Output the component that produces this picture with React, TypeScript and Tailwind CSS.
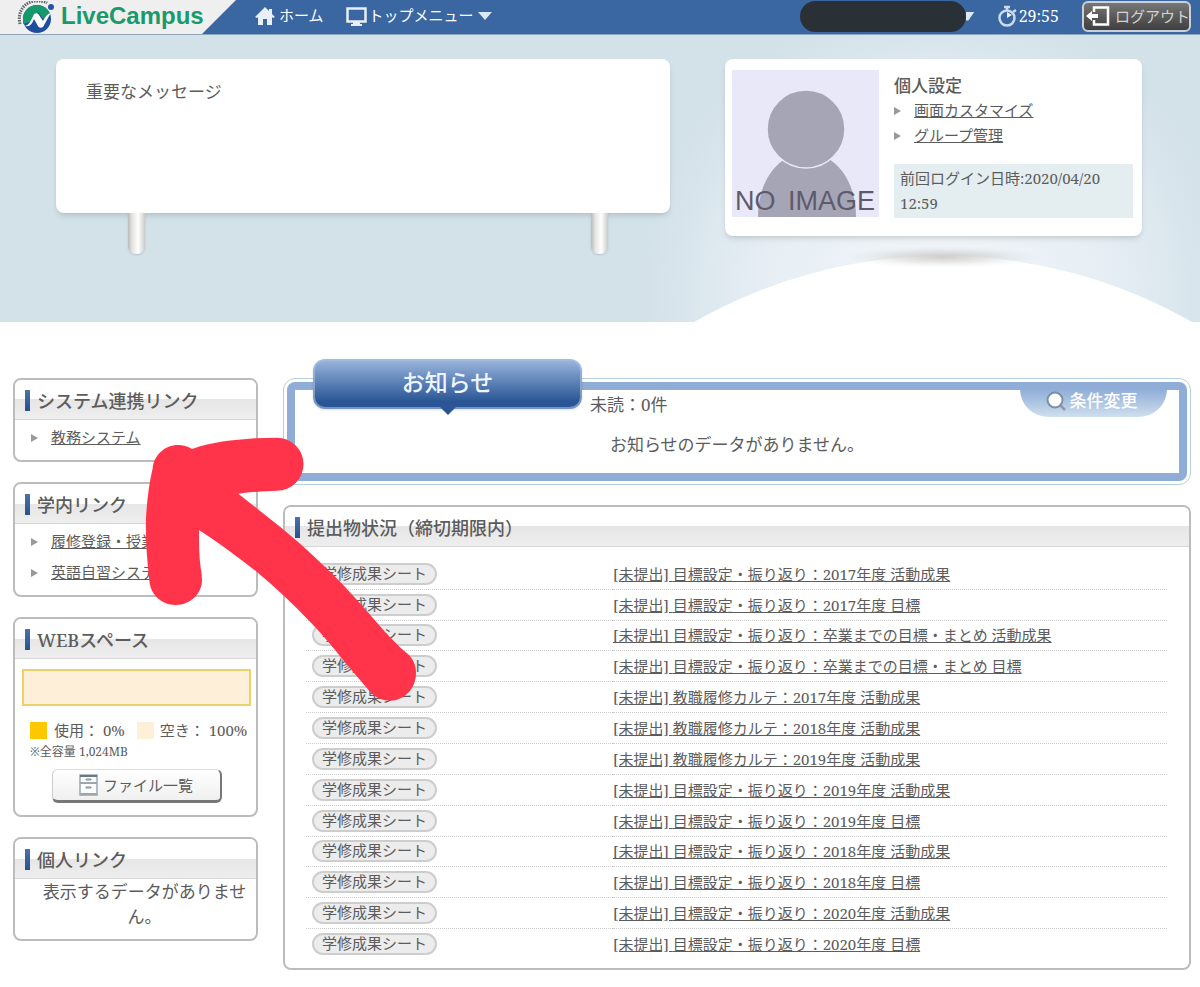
import type { ReactNode } from "react";

const submissions = [
  "目標設定・振り返り：2017年度 活動成果",
  "目標設定・振り返り：2017年度 目標",
  "目標設定・振り返り：卒業までの目標・まとめ 活動成果",
  "目標設定・振り返り：卒業までの目標・まとめ 目標",
  "教職履修カルテ：2017年度 活動成果",
  "教職履修カルテ：2018年度 活動成果",
  "教職履修カルテ：2019年度 活動成果",
  "目標設定・振り返り：2019年度 活動成果",
  "目標設定・振り返り：2019年度 目標",
  "目標設定・振り返り：2018年度 活動成果",
  "目標設定・振り返り：2018年度 目標",
  "目標設定・振り返り：2020年度 活動成果",
  "目標設定・振り返り：2020年度 目標",
];

const LogoMark = () => (
  <svg className="h-[33px] w-[38px] shrink-0" viewBox="0 0 38 33" aria-hidden="true">
    <path d="M3 23C0 10 8 1 18 0c5 0 9 0 12 2" fill="none" stroke="#5d6664" strokeWidth="3" strokeDasharray="1.5 1" />
    <circle cx="20" cy="18" r="14" fill="#1d4f9e" />
    <path d="M6 19a14 14 0 0 1 27-6l-7 5-5-7-8 10-7 2z" fill="#169a6b" />
    <path d="M8 25c4-1 6-5 9-12 2-1 4-1 5 1l4 6c2-4 4-7 8-8-3 4-5 9-8 14-2 1-4 1-5-1l-4-7c-2 5-4 8-9 7z" fill="#fff" />
    <circle cx="34" cy="6" r="3" fill="#2257a5" />
  </svg>
);

const HomeIcon = () => (
  <svg className="h-5 w-5" viewBox="0 0 20 20" fill="#e8eff8" aria-hidden="true">
    <path d="M10 1 0 11l2 1 1-1v8h5v-6h4v6h5v-8l1 1 2-1-3-3V3h-3v2z" />
  </svg>
);

const MonitorIcon = () => (
  <svg className="h-5 w-[22px]" viewBox="0 0 22 20" aria-hidden="true">
    <rect x="1.5" y="2.5" width="18" height="13" fill="none" stroke="#e8eff8" strokeWidth="2.5" />
    <path d="M7 16h7v2h2v2H5v-2h2z" fill="#e8eff8" />
  </svg>
);

const StopwatchIcon = () => (
  <svg className="h-[22px] w-5" viewBox="0 0 20 22" fill="none" stroke="#c9dcf0" aria-hidden="true">
    <circle cx="9" cy="13" r="7.5" strokeWidth="2.5" />
    <path d="M9 5V1M6 2h6M15 7l3-2" strokeWidth="2.5" />
    <path d="M9 13V7l5 3z" fill="#e8eff8" stroke="none" />
  </svg>
);

const LogoutIcon = () => (
  <svg className="h-5 w-6 shrink-0" viewBox="0 0 24 20" fill="none" stroke="#fff" aria-hidden="true">
    <path d="M8 6V1.5h14v17H8V14" strokeWidth="2.5" />
    <path d="M0 10l6-5v3h6v4H6v3z" fill="#fff" stroke="none" />
  </svg>
);

const CabinetIcon = () => (
  <svg className="h-[22px] w-[19px]" viewBox="0 0 19 22" fill="none" stroke="#9aa7b0" aria-hidden="true">
    <rect x="1" y="1" width="17" height="20" fill="#fff" strokeWidth="1.5" />
    <path d="M1 2h17" stroke="#6d7880" strokeWidth="2" />
    <path d="M1 9h17M1 20h17" strokeWidth="2" />
    <path d="M7 5h5v1H7zM7 13h5v1H7z" stroke="#7c8890" />
  </svg>
);

const Avatar = () => (
  <svg className="h-[147px] w-[147px] shrink-0" viewBox="0 0 147 147" role="img" aria-label="NO IMAGE">
    <rect width="147" height="147" fill="#e9e8f8" />
    <path d="M26 147c0-36 20-64 49-64s49 28 49 64z" fill="#a6a5b6" />
    <circle cx="74" cy="59" r="39" fill="#a6a5b6" stroke="#e9e8f8" strokeWidth="1.5" />
    <text y="140" fontSize="27" fill="#5d5b6b" fontFamily="Liberation Sans, sans-serif">
      <tspan x="3">NO</tspan> <tspan x="56">IMAGE</tspan>
    </text>
  </svg>
);

const Hill = () => (
  <svg className="absolute right-0 bottom-0 h-[100px] w-[506px]" viewBox="0 0 506 100" aria-hidden="true">
    <defs>
      <radialGradient id="hillShadow">
        <stop offset="0" stopColor="#b0aca2" stopOpacity="0.6" />
        <stop offset="0.5" stopColor="#c2c0ba" stopOpacity="0.35" />
        <stop offset="1" stopColor="#d3e1e9" stopOpacity="0" />
      </radialGradient>
    </defs>
    <path d="M0 100A502 502 0 0 1 498 100z" fill="#fff" />
    <ellipse cx="249" cy="35" rx="100" ry="11" fill="url(#hillShadow)" />
  </svg>
);

const ArrowMark = () => (
  <svg
    className="pointer-events-none absolute top-[436px] left-[144px] h-[268px] w-[276px]"
    viewBox="144 436 276 268"
    aria-hidden="true"
  >
    <path
      d="M192 449C212 442 232 440 255 438.300L277 437.700A26.500 26.500 0 0 1 277 490.700C264 491 251 492 238.300 493.700L280 526.700C295 539 309 551 323 565C338 579 350 592 363 606.700C376 621 391 640 406.700 653C413 658 416 665 416 673C416 689 404 700.700 390 700.700C382 700.700 375 697 370 691.700L343 660C333 647 322 634 310 621.700C293 604 275 587 256.700 571.700C238 557 219 543 199 530C199 543 199 556 200.700 568C201.500 572 202 576 202 580C202 594 190 605 175.700 605C161 605 150 594 149.300 580C147 560 145.500 539 146 518C147 500 149 484 152.700 468C154 455 165 445 178 445C183 445 188 446.500 192 449Z"
      fill="#ff344b"
    />
  </svg>
);

const LinkItem = ({ children }: { children: ReactNode }) => (
  <>
    <span className="h-0 w-0 border-y-4 border-l-[7px] border-y-transparent border-l-[#999]" />
    <a href="#" className="ml-[13px] whitespace-nowrap underline">
      {children}
    </a>
  </>
);

const Panel = ({ title, className = "", children }: { title: string; className?: string; children: ReactNode }) => (
  <section className="rounded-lg border-2 border-[#bcbcbc] bg-white">
    <div className="flex h-10 items-center gap-[7px] rounded-t-md border-b border-[#d6d6d6] bg-[linear-gradient(#fff_0%,#fff_50%,#e6e6e6_50%,#eee_100%)] pt-[2px] pl-[10px]">
      <span className="h-[21px] w-[5px] bg-linear-to-b from-[#4a72ab] to-[#27528f]" />
      <h2 className="text-lg leading-6 font-medium">{title}</h2>
    </div>
    <div className={className}>{children}</div>
  </section>
);

const Header = () => (
  <header className="flex h-[35px] items-center overflow-hidden border-b border-[#8fa5bd] bg-[#3a66a2] text-[15px] text-white">
    <div className="flex h-full w-[236px] items-center gap-[6px] bg-[#efefef] pl-[17px] [clip-path:polygon(0_0,100%_0,202px_100%,0_100%)]">
      <LogoMark />
      <span className="pb-[2px] font-['Liberation_Sans',sans-serif] text-2xl font-bold text-[#1a9a6c]">LiveCampus</span>
    </div>
    <nav className="ml-[19px] flex items-center gap-[22px] pb-[3px]">
      <a href="#" className="flex items-center gap-1">
        <HomeIcon />
        ホーム
      </a>
      <button type="button" className="flex items-center gap-px">
        <MonitorIcon />
        トップメニュー
        <span className="ml-[3px] border-x-[7px] border-t-8 border-x-transparent border-t-[#dce8f4]" />
      </button>
    </nav>
    <div className="ml-auto flex items-center pr-[9px] pb-[2px]">
      <button type="button" aria-label="ユーザー" className="flex items-center">
        <span className="h-[31px] w-[166px] rounded-full bg-[#293136]" />
        <span className="h-[9px] w-[9px] bg-[#dce8f4] [clip-path:polygon(0_0,100%_0,30%_100%,0_100%)]" />
      </button>
      <span className="ml-[23px] flex items-center gap-px text-base">
        <StopwatchIcon />
        29:55
      </span>
      <button
        type="button"
        className="ml-[23px] flex h-[31px] w-[109px] items-center gap-[5px] overflow-hidden rounded-md border-2 border-[#c9d0d8] bg-linear-to-b from-[#777] to-[#3f3f3f] pl-[2px] whitespace-nowrap text-[#d4d4d4]"
      >
        <LogoutIcon />
        ログアウト
      </button>
    </div>
  </header>
);

const Pole = () => (
  <span className="h-[41px] w-[17px] rounded-b-lg bg-[linear-gradient(90deg,#b9bab9,#e4e4e2_25%,#fff_60%,#c9cbcb)] shadow-sm" />
);

const Hero = () => (
  <div className="relative min-h-[287px] bg-[#d3e1e9] bg-[radial-gradient(circle_at_78%_90%,#f3f6fa_0%,#e6eef4_18%,#d3e1e9_30%)]">
    <Hill />
    <div className="relative grid grid-cols-[614fr_417fr] items-start gap-[55px] pt-6 pr-[58px] pl-14">
      <div>
        <div className="min-h-[154px] rounded-lg bg-white px-[30px] py-5 shadow-md">
          <h2 className="text-[17px] leading-[25px]">重要なメッセージ</h2>
        </div>
        <div className="flex justify-between pr-[62px] pl-[72px]">
          <Pole />
          <Pole />
        </div>
      </div>
      <div className="flex min-h-[177px] items-start gap-[15px] rounded-lg bg-white pt-[11px] pr-[9px] pl-[7px] shadow-md">
        <Avatar />
        <div className="flex-1 pt-[3px] text-[15px] leading-[25px]">
          <h2 className="text-[17px] font-medium">個人設定</h2>
          <ul>
            {["画面カスタマイズ", "グループ管理"].map((item) => (
              <li key={item} className="flex items-center">
                <LinkItem>{item}</LinkItem>
              </li>
            ))}
          </ul>
          <p className="mt-4 bg-[#e4edf0] px-[6px] py-[2px]">前回ログイン日時:2020/04/20 12:59</p>
        </div>
      </div>
    </div>
  </div>
);

const LinkPanel = ({ title, links }: { title: string; links: string[] }) => (
  <Panel title={title} className="px-4 pt-[2px] pb-[7px]">
    <ul className="text-[15px]">
      {links.map((link) => (
        <li key={link} className="flex h-[31px] items-center">
          <LinkItem>{link}</LinkItem>
        </li>
      ))}
    </ul>
  </Panel>
);

const Sidebar = () => (
  <aside className="flex w-[245px] shrink-0 flex-col gap-5">
    <LinkPanel title="システム連携リンク" links={["教務システム"]} />
    <LinkPanel title="学内リンク" links={["履修登録・授業", "英語自習システム"]} />
    <Panel title="WEBスペース" className="pt-[10px] pr-[5px] pb-3 pl-[7px]">
      <div className="h-[37px] border-2 border-[#ecd069] bg-[#fdefd8]" />
      <div className="mt-3 flex items-center pl-2 text-[15px] leading-6 whitespace-nowrap">
        <span className="mr-[7px] h-[17px] w-[17px] bg-[#fdc800]" />
        使用： 0%
        <span className="mr-[6px] ml-3 h-[17px] w-[17px] bg-[#fdefd8]" />
        空き： 100%
      </div>
      <p className="pl-2 text-xs leading-5">※全容量 1,024MB</p>
      <button
        type="button"
        className="mx-auto mt-[7px] flex h-[34px] w-[170px] items-center justify-center gap-[5px] rounded-md border border-r-2 border-b-[3px] border-t-[#ddd] border-r-[#777] border-b-[#777] border-l-[#ccc] bg-linear-to-b from-white to-[#f0f0f0] text-[15px]"
      >
        <CabinetIcon />
        ファイル一覧
      </button>
    </Panel>
    <Panel title="個人リンク" className="pr-2 pb-[10px] pl-[26px]">
      <p className="text-center text-[17px] leading-[25px]">表示するデータがありません。</p>
    </Panel>
  </aside>
);

const Notices = () => (
  <section className="relative rounded-xl border border-[#b5cfdb] bg-white p-[3px] text-[17px] leading-[25px]">
    <div className="rounded-lg border-8 border-[#8fadd6] pb-4">
      <p className="pt-[2px] pl-[295px]">未読：0件</p>
      <p className="mt-[15px] text-center">お知らせのデータがありません。</p>
    </div>
    <div className="absolute -top-5 left-[29px] flex h-[50px] w-[269px] items-center justify-center rounded-xl border-2 border-[#a6bfe0]/60 bg-linear-to-b from-[#9db8df] to-[#2a5695] to-85% bg-origin-border shadow-sm">
      <h2 className="pb-1 text-[23px] font-medium text-[#eef5ff]">お知らせ</h2>
      <span className="absolute top-full border-x-8 border-t-8 border-x-transparent border-t-[#2a5695]" />
    </div>
    <button
      type="button"
      className="absolute top-[10px] right-[23px] flex h-7 w-[147px] items-center justify-center gap-1 rounded-b-[28px] bg-linear-to-b from-[#8fadd6] to-[#cfdfee] pr-1 pb-[5px] font-medium text-white"
    >
      <svg className="h-5 w-5" viewBox="0 0 20 20" aria-hidden="true">
        <path d="m14 14 5 5" stroke="#8f9aa5" strokeWidth="2.5" />
        <circle cx="9" cy="9" r="7.5" fill="#fff" stroke="#7b8fa9" strokeWidth="2" />
      </svg>
      条件変更
    </button>
  </section>
);

const Submissions = () => (
  <Panel title="提出物状況（締切期限内）" className="pt-3 pr-[22px] pb-[9px] pl-[21px]">
    <table className="h-[400px] w-full table-fixed text-left text-[15px] leading-5">
      <tbody>
        {submissions.map((item) => (
          <tr key={item} className="border-b border-dotted border-[#ccc] last:border-b-0">
            <td className="w-[307px] pl-[6px]">
              <span className="flex h-[22px] w-[125px] items-center justify-center rounded-full border-2 border-[#cdcdcd] bg-[#ececec] pb-[2px]">
                学修成果シート
              </span>
            </td>
            <td>
              <a href="#" className="underline">
                [未提出] {item}
              </a>
            </td>
          </tr>
        ))}
      </tbody>
    </table>
  </Panel>
);

const App = () => {
  return (
    <div className="relative min-h-screen bg-white font-['Noto_Serif','Liberation_Serif','Noto_Sans_CJK_JP',serif] text-[#5c5c5c]">
      <Header />
      <Hero />
      <main className="flex items-start gap-[25px] pt-14 pr-[9px] pb-4 pl-[13px]">
        <Sidebar />
        <div className="flex min-w-0 flex-1 flex-col gap-5">
          <Notices />
          <Submissions />
        </div>
      </main>
      <ArrowMark />
    </div>
  );
};

export default App;
